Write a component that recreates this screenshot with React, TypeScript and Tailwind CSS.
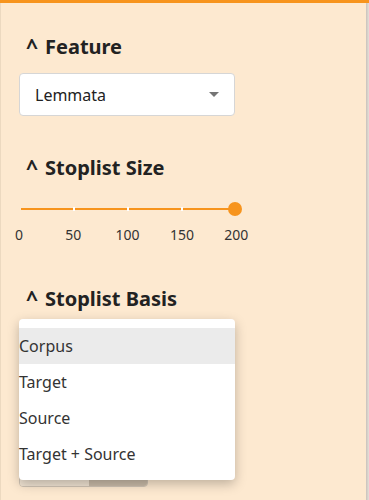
import React from 'react';

const ticks = [0, 50, 100, 150, 200];

function Heading({ label }: { label: string }) {
  return (
    <h2 className="flex items-center gap-[5px] text-[20px] font-bold leading-none text-[#222]">
      <span className="w-[14px] text-[21px] leading-none">^</span>
      <span>{label}</span>
    </h2>
  );
}

function Slider() {
  return (
    <div className="w-[230px]">
      <div className="relative h-[14px] ml-[2px]">
        <div className="absolute left-0 right-[12px] top-[6px] h-[2px] bg-[#f7941d]" />
        {/* tick gaps */}
        {[52, 106, 160].map((x) => (
          <div key={x} className="absolute top-[5px] h-[4px] w-[2px] bg-white" style={{ left: x }} />
        ))}
        <div className="absolute left-[207px] top-0 h-[14px] w-[14px] rounded-full bg-[#f7941d]" />
      </div>
      <div className="relative mt-[12px] h-[18px] text-[14px] text-[#333]">
        {ticks.map((t, i) => (
          <span
            key={t}
            className="absolute -translate-x-1/2 leading-none"
            style={{ left: i * 54.3 }}
          >
            {t}
          </span>
        ))}
      </div>
    </div>
  );
}

export default function App() {
  const options = ['Corpus', 'Target', 'Source', 'Target + Source'];

  return (
    <div
      className="relative h-[500px] w-[369px] overflow-hidden bg-[#fde9d0]"
      style={{ fontFamily: '"Noto Sans", "Open Sans", sans-serif' }}
    >
      <div className="h-[3px] w-full bg-[#f7941d]" />
      <div className="absolute left-0 top-[3px] bottom-0 w-px bg-[#ecd9c0]" />
      <div className="absolute right-0 top-[3px] bottom-0 w-[3px] bg-gradient-to-r from-[#c9c2bb] to-[#e6e0da]" />

      <div className="flex flex-col pl-[19px] pt-[33px]">
        <div className="pl-[7px]">
          <Heading label="Feature" />
        </div>

        <div className="mt-[16px] flex h-[43px] w-[216px] items-center justify-between rounded-[4px] border border-[#d6d6d6] bg-white pl-[15px] pr-[15px]">
          <span className="text-[16px] text-[#222]">Lemmata</span>
          <span className="h-0 w-0 border-l-[5px] border-r-[5px] border-t-[5px] border-l-transparent border-r-transparent border-t-[#757575]" />
        </div>

        <div className="mt-[41px] pl-[7px]">
          <Heading label="Stoplist Size" />
        </div>

        <div className="mt-[24px]">
          <Slider />
        </div>

        <div className="mt-[42px] pl-[7px]">
          <Heading label="Stoplist Basis" />
        </div>

        <div className="mt-[17px] h-[43px] w-[216px] rounded-[4px] border border-[#f7941d] bg-white" />

        <div className="mt-[82px] flex h-[36px] w-[129px] overflow-hidden rounded-[4px] border border-[#cfc3b4]">
          <div className="flex-1 bg-[#f1e4d3]" />
          <div className="w-[58px] bg-[#c9bba9]" />
        </div>
      </div>

      <div className="absolute left-[19px] top-[319px] w-[216px] rounded-[4px] bg-white pt-[9px] pb-[8px] shadow-[0_4px_12px_rgba(0,0,0,0.25)]">
        {options.map((o, i) => (
          <div
            key={o}
            className={`flex h-[36px] items-center text-[16px] text-[#333] ${i === 0 ? 'bg-[#ebebeb]' : ''}`}
          >
            {o}
          </div>
        ))}
      </div>
    </div>
  );
}
